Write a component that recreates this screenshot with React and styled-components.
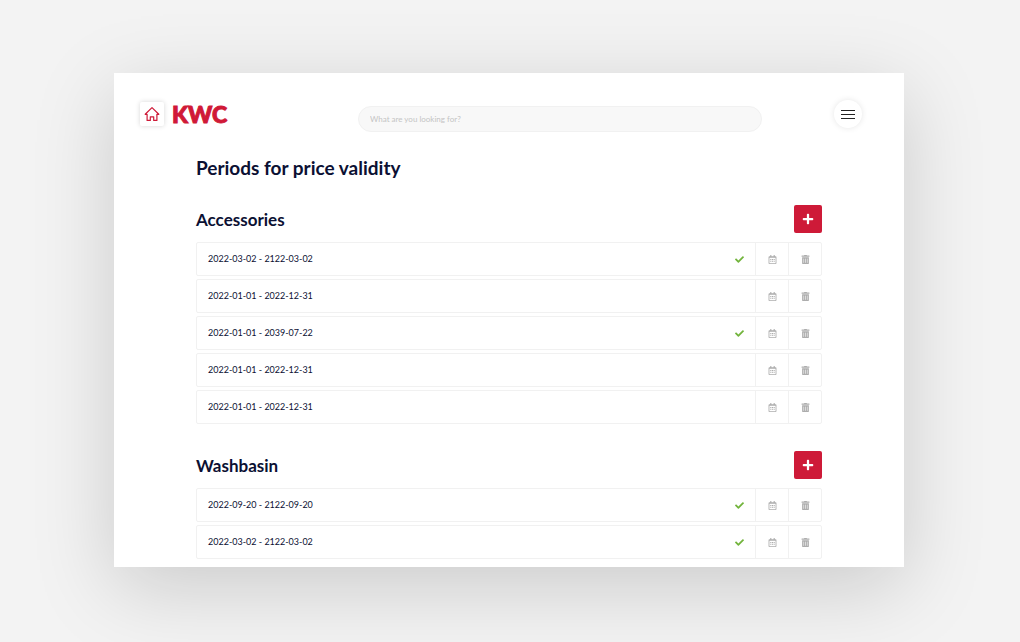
import React from "react";
import styled, { createGlobalStyle } from "styled-components";
import { FaCheck, FaPlus, FaRegCalendarAlt, FaTrashAlt } from "react-icons/fa";

const GlobalStyle = createGlobalStyle`
  * {
    box-sizing: border-box;
  }
  body {
    margin: 0;
    background: #f3f3f3;
    color: #0b1033;
    font-family: Lato, "Open Sans", sans-serif;
  }
  button {
    padding: 0;
    border: 0;
    background: none;
    font: inherit;
    cursor: pointer;
  }
`;

const Page = styled.div`
  min-height: 100vh;
  padding: 73px 116px 75px 114px;
  overflow: hidden;
`;

const Panel = styled.div`
  padding: 27px 42px 8px 26px;
  background: #fff;
  box-shadow: 0 20px 76px rgba(0, 0, 0, 0.17);
`;

const Header = styled.header`
  display: flex;
  align-items: flex-start;
`;

const Brand = styled.div`
  display: flex;
  align-items: center;
  gap: 8px;
  width: 218px;
  height: 28px;
`;

const HomeLink = styled.a`
  display: flex;
  align-items: center;
  justify-content: center;
  width: 24px;
  height: 24px;
  border-radius: 2px;
  color: #ce1a38;
  background: #fff;
  box-shadow: 0 0 5px rgba(0, 0, 0, 0.16);
`;

const Logo = styled.span`
  color: #d01937;
  font-family: Lato, sans-serif;
  font-size: 23px;
  font-weight: 900;
  line-height: 28px;
  -webkit-text-stroke: 1px #d01937;
`;

const Search = styled.input`
  flex: 1;
  min-width: 0;
  height: 26px;
  margin: 6px 72px 0 0;
  padding: 0 11px;
  border: 1px solid #f1f1f1;
  border-radius: 13px;
  background: #f8f8f8;
  color: #0b1033;
  font-family: inherit;
  font-size: 8px;

  &::placeholder {
    color: #c4c4c4;
    opacity: 1;
  }
`;

const MenuButton = styled.button`
  display: flex;
  align-items: center;
  justify-content: center;
  width: 28px;
  height: 28px;
  border-radius: 50%;
  color: #222;
  background: #fff;
  box-shadow: 0 0 6px rgba(0, 0, 0, 0.1);
`;

const Content = styled.main`
  padding: 26px 40px 0 56px;
`;

const Title = styled.h1`
  margin: 0;
  font-size: 19px;
  font-weight: 700;
  line-height: 20px;
`;

const Group = styled.section`
  margin-top: 27px;
`;

const GroupHeader = styled.div`
  display: flex;
  align-items: center;
  justify-content: space-between;
  height: 28px;
  margin-bottom: 9px;
`;

const GroupTitle = styled.h2`
  margin: 0;
  padding-top: 2px;
  font-size: 17px;
  font-weight: 700;
  line-height: 20px;
`;

const AddButton = styled.button`
  display: flex;
  align-items: center;
  justify-content: center;
  width: 28px;
  height: 28px;
  border-radius: 2px;
  color: #fff;
  background: #ce1a38;
  font-size: 12px;
`;

const Rows = styled.ul`
  display: grid;
  gap: 3px;
  margin: 0;
  padding: 0;
  list-style: none;
`;

const Row = styled.li`
  display: flex;
  align-items: stretch;
  height: 34px;
  border: 1px solid #f1f1f1;
  border-radius: 2px;
`;

const Period = styled.span`
  flex: 1;
  padding-left: 11px;
  font-size: 9px;
  line-height: 32px;
`;

const Status = styled.span`
  display: flex;
  align-items: center;
  width: 20px;
  color: #72b43c;
  font-size: 9px;
`;

const RowButton = styled.button`
  display: flex;
  align-items: center;
  justify-content: center;
  width: 33px;
  border-left: 1px solid #f1f1f1;
  color: #adadad;
  font-size: 9px;
`;

const groups = [
  {
    title: "Accessories",
    periods: [
      { range: "2022-03-02 - 2122-03-02", active: true },
      { range: "2022-01-01 - 2022-12-31" },
      { range: "2022-01-01 - 2039-07-22", active: true },
      { range: "2022-01-01 - 2022-12-31" },
      { range: "2022-01-01 - 2022-12-31" },
    ],
  },
  {
    title: "Washbasin",
    periods: [
      { range: "2022-09-20 - 2122-09-20", active: true },
      { range: "2022-03-02 - 2122-03-02", active: true },
    ],
  },
];

const HomeIcon = () => (
  <svg width="16" height="16" viewBox="0 0 16 16" fill="none" stroke="currentColor" strokeWidth="1.2" strokeLinejoin="round" strokeLinecap="round">
    <path d="M1.2 8.3 8 1.6l6.8 6.7h-1.9v6.1H9.7v-3.6H6.3v3.6H3.1V8.3Z" />
  </svg>
);

const MenuIcon = () => (
  <svg width="14" height="10" viewBox="0 0 14 10" stroke="currentColor" strokeWidth="1">
    <path d="M0 1.5h14M0 5.5h14M0 9.5h14" />
  </svg>
);

const PeriodRow = ({ range, active }) => (
  <Row>
    <Period>{range}</Period>
    {active && (
      <Status role="img" aria-label="Active">
        <FaCheck />
      </Status>
    )}
    <RowButton type="button" aria-label={`Edit ${range}`}>
      <FaRegCalendarAlt />
    </RowButton>
    <RowButton type="button" aria-label={`Delete ${range}`}>
      <FaTrashAlt />
    </RowButton>
  </Row>
);

export default function App() {
  return (
    <Page>
      <GlobalStyle />
      <Panel>
        <Header>
          <Brand>
            <HomeLink href="#" aria-label="Home">
              <HomeIcon />
            </HomeLink>
            <Logo>KWC</Logo>
          </Brand>
          <Search type="search" aria-label="Search" placeholder="What are you looking for?" />
          <MenuButton type="button" aria-label="Menu">
            <MenuIcon />
          </MenuButton>
        </Header>
        <Content>
          <Title>Periods for price validity</Title>
          {groups.map(({ title, periods }) => (
            <Group key={title}>
              <GroupHeader>
                <GroupTitle>{title}</GroupTitle>
                <AddButton type="button" aria-label={`Add period to ${title}`}>
                  <FaPlus />
                </AddButton>
              </GroupHeader>
              <Rows>
                {periods.map((period, i) => (
                  <PeriodRow key={i} {...period} />
                ))}
              </Rows>
            </Group>
          ))}
        </Content>
      </Panel>
    </Page>
  );
}
